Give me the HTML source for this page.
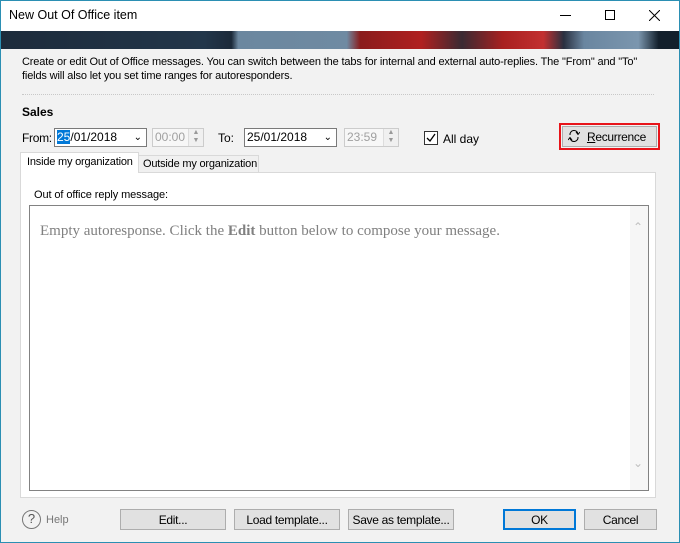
<!DOCTYPE html>
<html><head><style>
*{box-sizing:border-box;margin:0;padding:0}
body{width:680px;height:543px;overflow:hidden;font-family:"Liberation Sans",sans-serif;font-size:11px;color:#000;background:#f0f0f0;position:relative;white-space:nowrap}
.a{position:absolute}
.win{left:0;top:0;width:680px;height:543px;border:1px solid #2b8fb3;background:#f2f2f2}
.title{left:1px;top:1px;width:678px;height:30px;background:#fff}
.banner{left:1px;top:31px;width:678px;height:18px;background:linear-gradient(90deg,#1d2b3b 0,#22364a 30%,#1c2a3a 34%,#6b879f 35%,#6f8aa2 51%,#8a1c1c 53%,#b02020 62%,#3a2a33 68%,#a82020 74%,#c23030 80%,#2a3040 83%,#6a86a0 86%,#7b96ae 94%,#13202c 97%)}
.btn{position:absolute;height:21px;background:#e1e1e1;border:1px solid #adadad;text-align:center;line-height:20px;font-size:12px;letter-spacing:-0.3px}
.inp{position:absolute;height:19px;background:#fff;border:1px solid #7a7a7a;font-size:12px;line-height:17px;padding-left:2px}
.dis{background:#f7f7f7;border-color:#cccccc;color:#a0a0a0}
</style></head><body>
<div class="a win"></div>
<div class="a title"></div>
<div class="a" style="left:9px;top:8px;font-size:12.5px">New Out Of Office item</div>
<div class="a" style="left:560px;top:15px;width:11px;height:1px;background:#000"></div>
<div class="a" style="left:605px;top:10px;width:10px;height:10px;border:1px solid #000"></div>
<svg class="a" style="left:649px;top:10px" width="11" height="11"><path d="M0 0L11 11M11 0L0 11" stroke="#000" stroke-width="1"/></svg>
<div class="a banner"></div>
<div class="a" style="left:22px;top:55px;line-height:14px;font-size:11px;letter-spacing:-0.15px">Create or edit Out of Office messages. You can switch between the tabs for internal and external auto-replies. The "From" and "To"<br>fields will also let you set time ranges for autoresponders.</div>
<div class="a" style="left:22px;top:94px;width:632px;border-top:1px dotted #c8c8c8"></div>
<div class="a" style="left:22px;top:105px;font-weight:bold;font-size:12px">Sales</div>
<div class="a" style="left:22px;top:131px;font-size:12px;letter-spacing:-0.3px">From:</div>
<div class="inp" style="left:54px;top:128px;width:93px"><span style="background:#0078d7;color:#fff">25</span>/01/2018<span style="position:absolute;right:4px;top:0;font-size:10px">&#8964;</span></div>
<div class="inp dis" style="left:152px;top:128px;width:52px">00:00</div>
<div class="a" style="left:188px;top:129px;width:15px;height:17px;background:#f0f0f0;border-left:1px solid #ddd;font-size:7px;color:#999;text-align:center;line-height:8px">▲<br>▼</div>
<div class="a" style="left:218px;top:131px;font-size:12px">To:</div>
<div class="inp" style="left:244px;top:128px;width:93px">25/01/2018<span style="position:absolute;right:4px;top:0;font-size:10px">&#8964;</span></div>
<div class="inp dis" style="left:344px;top:128px;width:55px">23:59</div>
<div class="a" style="left:383px;top:129px;width:15px;height:17px;background:#f0f0f0;border-left:1px solid #ddd;font-size:7px;color:#999;text-align:center;line-height:8px">▲<br>▼</div>
<div class="a" style="left:424px;top:131px;width:14px;height:14px;border:1px solid #333;background:#fff"></div>
<svg class="a" style="left:426px;top:133px" width="10" height="10"><path d="M1 5L4 8L9 1" stroke="#000" stroke-width="1.3" fill="none"/></svg>
<div class="a" style="left:443px;top:132px;font-size:12px">All day</div>
<div class="a" style="left:559px;top:123px;width:101px;height:27px;border:2px solid #e8141a"></div>
<div class="btn" style="left:562px;top:126px;width:95px;height:21px;padding-left:14px"><u>R</u>ecurrence</div>
<svg class="a" style="left:568px;top:129px" width="12" height="14"><path d="M2 6A4 4 0 0 1 10 5M10 8A4 4 0 0 1 2 9" stroke="#000" fill="none"/><path d="M8 3L10 5.5L12 3M0 11L2 8.5L4 11" stroke="#000" fill="none"/></svg>
<div class="a" style="left:138px;top:155px;width:121px;height:18px;background:#f0f0f0;border:1px solid #d9d9d9;padding:2px 0 0 4px;letter-spacing:-0.2px">Outside my organization</div>
<div class="a" style="left:20px;top:172px;width:636px;height:326px;background:#fff;border:1px solid #d9d9d9"></div>
<div class="a" style="left:20px;top:152px;width:119px;height:21px;background:#fff;border:1px solid #d9d9d9;border-bottom:none;padding:3px 0 0 6px;letter-spacing:-0.2px">Inside my organization</div>
<div class="a" style="left:34px;top:189px;letter-spacing:-0.1px">Out of office reply message:</div>
<div class="a" style="left:29px;top:205px;width:620px;height:286px;border:1px solid #828282;background:#fff"></div>
<div class="a" style="left:630px;top:206px;width:18px;height:284px;background:#f6f6f6"></div>
<div class="a" style="left:633px;top:220px;color:#c0c0c0;font-size:12px">&#8963;</div>
<div class="a" style="left:633px;top:456px;color:#c0c0c0;font-size:12px">&#8964;</div>
<div class="a" style="left:40px;top:223px;font-family:'Liberation Serif',serif;font-size:15px;color:#808080">Empty autoresponse. Click the <b>Edit</b> button below to compose your message.</div>
<div class="a" style="left:22px;top:510px;width:19px;height:19px;border:1.5px solid #777;border-radius:50%;text-align:center;line-height:16px;font-size:13px;color:#555">?</div>
<div class="a" style="left:46px;top:514px;color:#777;font-size:11px">Help</div>
<div class="btn" style="left:120px;top:509px;width:106px">Edit...</div>
<div class="btn" style="left:234px;top:509px;width:106px">Load template...</div>
<div class="btn" style="left:348px;top:509px;width:106px">Save as template...</div>
<div class="btn" style="left:503px;top:509px;width:73px;border:2px solid #0078d7;line-height:18px">OK</div>
<div class="btn" style="left:584px;top:509px;width:73px">Cancel</div>
</body></html>
